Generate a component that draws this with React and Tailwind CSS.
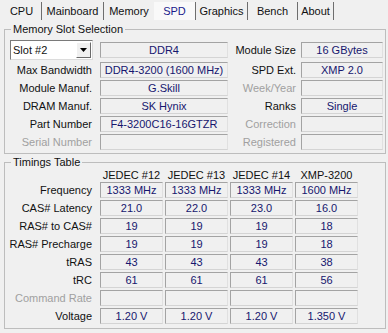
import React from "react";

const tabs = [
    { name: "CPU", w: "w-[40px]" },
    { name: "Mainboard", w: "w-[62px]" },
    { name: "Memory", w: "w-[50px]" },
    { name: "SPD", w: "w-[42px]" },
    { name: "Graphics", w: "w-[52px]" },
    { name: "Bench", w: "w-[50px]" },
    { name: "About", w: "w-[36px]" },
];

const timings = [
    { label: "Frequency", values: ["1333 MHz", "1333 MHz", "1333 MHz", "1600 MHz"] },
    { label: "CAS# Latency", values: ["21.0", "22.0", "23.0", "16.0"] },
    { label: "RAS# to CAS#", values: ["19", "19", "19", "18"] },
    { label: "RAS# Precharge", values: ["19", "19", "19", "18"] },
    { label: "tRAS", values: ["43", "43", "43", "38"] },
    { label: "tRC", values: ["61", "61", "61", "56"] },
    { label: "Command Rate", values: ["", "", "", ""], disabled: true },
    { label: "Voltage", values: ["1.20 V", "1.20 V", "1.20 V", "1.350 V"] },
];

function Box({ children, className = "" }) {
    return (
        <div
            className={`h-[16px] border border-t-[#a3a3a3] border-l-[#a3a3a3] border-r-[#e0e0e0] border-b-[#d4d4d4] text-center leading-[14px] text-[#16166e] whitespace-nowrap overflow-hidden ${className}`}
        >
            {children}
        </div>
    );
}

function Label({ children, disabled, className = "" }) {
    return (
        <div
            className={`text-right whitespace-nowrap ${disabled ? "text-[#a0a0a0]" : "text-[#111]"} ${className}`}
        >
            {children}
        </div>
    );
}

function SlotRow({ left, leftValue, right, rightValue, leftDisabled, rightDisabled }) {
    return (
        <div className="flex h-[18px] items-center">
            <Label disabled={leftDisabled} className="w-[87px]">
                {left}
            </Label>
            <Box className="ml-[8px] w-[128px]">{leftValue}</Box>
            <Label disabled={rightDisabled} className="w-[68px]">
                {right}
            </Label>
            <Box className="ml-[5px] w-[82px]">{rightValue}</Box>
        </div>
    );
}

export default function App() {
    return (
        <div className="w-[388px] h-[333px] overflow-hidden bg-[#f0f0f0] font-['Liberation_Sans',Arial,sans-serif] text-[11px] text-[#111]">
            <div className="flex h-[22px] pl-[2px] pt-[2px]">
                {tabs.map((tab, i) => {
                    const active = tab.name === "SPD";
                    const beforeActive = tabs[i + 1]?.name === "SPD";
                    return (
                        <div
                            key={tab.name}
                            className={`${tab.w} h-[18px] flex items-center justify-center ${
                                active
                                    ? "bg-[#f9f9f9] text-[#1a1a8c] border-r border-r-[#6e6e6e]"
                                    : beforeActive
                                      ? ""
                                      : "border-r border-r-[#6e6e6e]"
                            }`}
                        >
                            {tab.name}
                        </div>
                    );
                })}
            </div>

            <fieldset className="ml-[4px] w-[382px] border border-[#bdbdbd] px-0 pt-[3px] pb-[2px]">
                <legend className="ml-[6px] px-[2px] leading-[14px]">Memory Slot Selection</legend>
                <div className="flex h-[22px] items-center">
                    <div className="ml-[5px] w-[83px] h-[20px] flex items-center justify-between bg-white border border-t-[#7a7a7a] border-l-[#7a7a7a] border-r-[#dcdcdc] border-b-[#dcdcdc]">
                        <span className="pl-[2px]">Slot #2</span>
                        <div className="mr-[1px] w-[15px] h-[16px] flex items-center justify-center bg-[#f0f0f0] border border-t-white border-l-white border-r-[#6a6a6a] border-b-[#6a6a6a]">
                            <svg width="7" height="4" viewBox="0 0 7 4">
                                <polygon points="0,0 7,0 3.5,4" fill="#000" />
                            </svg>
                        </div>
                    </div>
                    <Box className="ml-[7px] w-[128px]">DDR4</Box>
                    <Label className="w-[68px]">Module Size</Label>
                    <Box className="ml-[5px] w-[82px]">16 GBytes</Box>
                </div>
                <SlotRow left="Max Bandwidth" leftValue="DDR4-3200 (1600 MHz)" right="SPD Ext." rightValue="XMP 2.0" />
                <SlotRow left="Module Manuf." leftValue="G.Skill" right="Week/Year" rightDisabled />
                <SlotRow left="DRAM Manuf." leftValue="SK Hynix" right="Ranks" rightValue="Single" />
                <SlotRow left="Part Number" leftValue="F4-3200C16-16GTZR" right="Correction" rightDisabled />
                <SlotRow left="Serial Number" leftDisabled right="Registered" rightDisabled />
            </fieldset>

            <fieldset className="mt-[1px] ml-[4px] w-[382px] border border-[#bdbdbd] px-0 pt-0 pb-[3px]">
                <legend className="ml-[6px] px-[2px] leading-[14px]">Timings Table</legend>
                <div className="flex h-[12px] items-center">
                    <div className="w-[95px]" />
                    <div className="flex gap-[2px]">
                        {["JEDEC #12", "JEDEC #13", "JEDEC #14", "XMP-3200"].map((h) => (
                            <div key={h} className="w-[63px] text-center whitespace-nowrap">
                                {h}
                            </div>
                        ))}
                    </div>
                </div>
                {timings.map((row) => (
                    <div key={row.label} className="flex h-[18px] items-center">
                        <Label disabled={row.disabled} className="w-[87px]">
                            {row.label}
                        </Label>
                        <div className="ml-[8px] flex gap-[2px]">
                            {row.values.map((v, i) => (
                                <Box key={i} className="w-[63px]">
                                    {v}
                                </Box>
                            ))}
                        </div>
                    </div>
                ))}
            </fieldset>
        </div>
    );
}
